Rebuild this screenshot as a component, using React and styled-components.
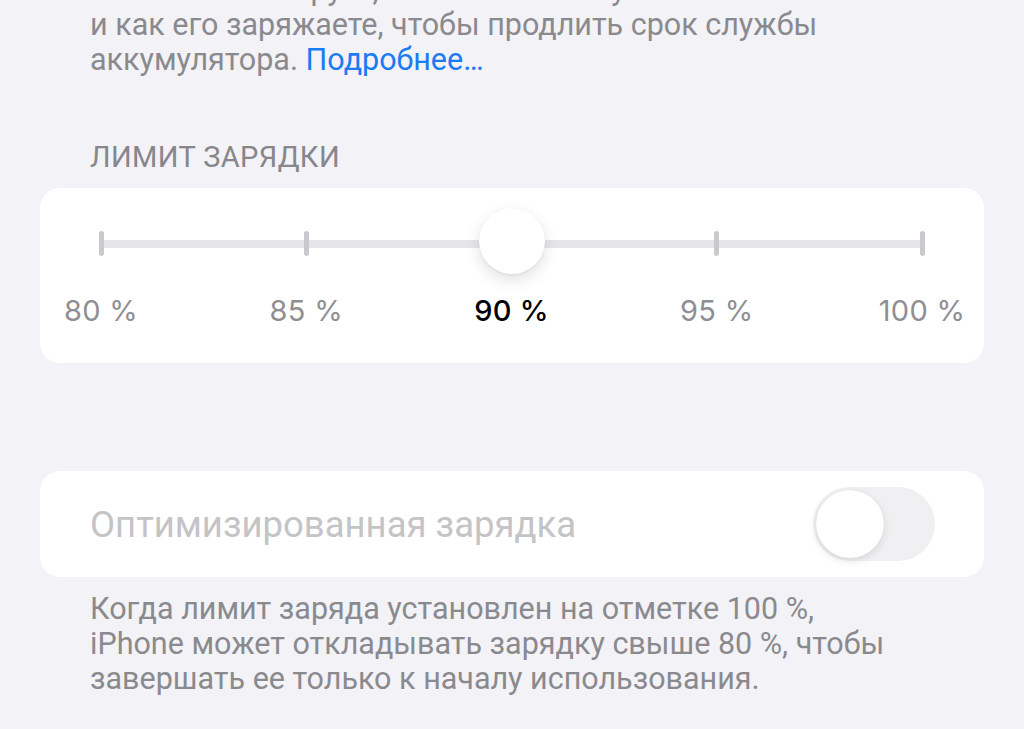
import React from 'react';
import styled, { createGlobalStyle } from 'styled-components';

const GlobalStyle = createGlobalStyle`
  html, body {
    margin: 0;
    padding: 0;
    background: #f2f2f7;
    overflow: hidden;
  }
  body {
    font-family: Roboto, "Noto Sans", sans-serif;
    -webkit-font-smoothing: antialiased;
  }
`;

const Page = styled.div`
  width: 1024px;
  height: 729px;
  padding: 0 40px;
  box-sizing: border-box;
`;

const Footnote = styled.p`
  margin: ${(p) => p.$top || '0'} 0 0;
  padding: 0 50px;
  font-size: 30.5px;
  line-height: 35px;
  color: #8a8a8e;
  white-space: nowrap;
`;

const Link = styled.span`
  color: #1a7bf2;
`;

const SectionHeader = styled.h3`
  margin: 65px 0 16px;
  padding: 0 50px;
  font-size: 29px;
  line-height: 30px;
  font-weight: 400;
  color: #86868b;
  letter-spacing: 0.4px;
`;

const Card = styled.div`
  background: #ffffff;
  border-radius: 20px;
  box-sizing: border-box;
  height: ${(p) => p.$height};
  margin-top: ${(p) => p.$top || '0'};
`;

const SliderCard = styled(Card)`
  padding: 43px 59.5px 0 58.5px;
`;

const Stops = styled.div`
  position: relative;
  display: flex;
  justify-content: space-between;

  &::before {
    content: '';
    position: absolute;
    left: 2px;
    right: 2px;
    top: 9px;
    height: 8px;
    background: #e5e5ea;
  }
`;

const Stop = styled.div`
  position: relative;
  width: 5px;
  display: flex;
  flex-direction: column;
  align-items: center;
`;

const Tick = styled.div`
  width: 5px;
  height: 25px;
  border-radius: 3px;
  background: #c9c9ce;
`;

const Label = styled.span`
  margin-top: 38px;
  white-space: nowrap;
  font-family: Inter, Roboto, sans-serif;
  font-size: 29px;
  letter-spacing: 0.3px;
  line-height: 34px;
  font-weight: ${(p) => (p.$active ? 500 : 400)};
  color: ${(p) => (p.$active ? '#000000' : '#8e8e93')};
`;

const Thumb = styled.div`
  position: absolute;
  top: -23px;
  left: 50%;
  width: 66px;
  height: 66px;
  margin-left: -33px;
  border-radius: 50%;
  background: #ffffff;
  box-shadow: 0 6px 16px rgba(0, 0, 0, 0.12), 0 1px 3px rgba(0, 0, 0, 0.06);
`;

const ToggleCard = styled(Card)`
  display: flex;
  align-items: center;
  justify-content: space-between;
  padding: 0 49px 0 50px;
`;

const ToggleTitle = styled.span`
  font-size: 36.5px;
  color: #c4c4c7;
`;

const Switch = styled.div`
  width: 122px;
  height: 74px;
  border-radius: 37px;
  background: #f0f0f2;
  padding: 3px;
  box-sizing: border-box;
  display: flex;
  justify-content: ${(p) => (p.$on ? 'flex-end' : 'flex-start')};
`;

const Knob = styled.div`
  width: 68px;
  height: 68px;
  border-radius: 50%;
  background: #ffffff;
  box-shadow: 0 3px 8px rgba(0, 0, 0, 0.1), 0 0 1px rgba(0, 0, 0, 0.1);
`;

const limits = [80, 85, 90, 95, 100];

export default function App() {
  const current = 90;
  return (
    <Page>
      <GlobalStyle />
      <Footnote $top="-28px">
        iPhone анализирует, как Вы используете его
        <br />
        и как его заряжаете, чтобы продлить срок службы
        <br />
        аккумулятора. <Link>Подробнее…</Link>
      </Footnote>

      <SectionHeader>ЛИМИТ ЗАРЯДКИ</SectionHeader>
      <SliderCard $height="175px">
        <Stops>
          {limits.map((v) => (
            <Stop key={v}>
              <Tick />
              <Label $active={v === current}>{v} %</Label>
            </Stop>
          ))}
          <Thumb />
        </Stops>
      </SliderCard>

      <ToggleCard $height="106px" $top="108px">
        <ToggleTitle>Оптимизированная зарядка</ToggleTitle>
        <Switch>
          <Knob />
        </Switch>
      </ToggleCard>

      <Footnote $top="14px">
        Когда лимит заряда установлен на отметке 100 %,
        <br />
        iPhone может откладывать зарядку свыше 80 %, чтобы
        <br />
        завершать ее только к началу использования.
      </Footnote>
    </Page>
  );
}
